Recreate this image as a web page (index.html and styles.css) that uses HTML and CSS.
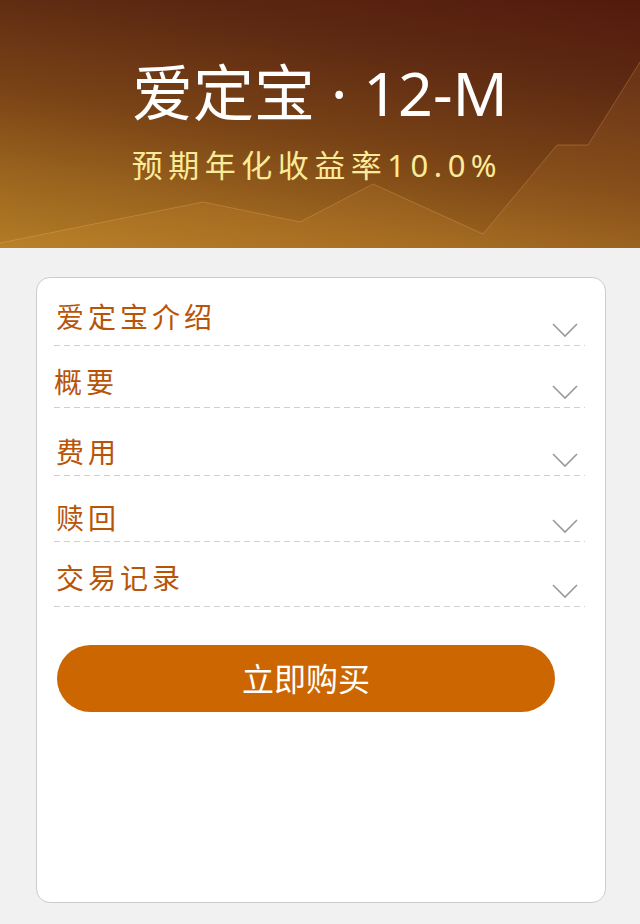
FILE: index.html
```html
<!DOCTYPE html>
<html lang="zh-CN">
<head>
<meta charset="utf-8">
<title>爱定宝 · 12-M</title>
<link rel="stylesheet" href="styles.css">
</head>
<body>
  <header class="hero">
    <svg class="hero-chart" viewBox="0 0 640 248" preserveAspectRatio="none" aria-hidden="true">
      <polygon class="chart-area" points="0,243 203,202 300,222 373,184 483,234 557,145 588,145 640,62 640,248 0,248"/>
      <polyline class="chart-line" points="0,243 203,202 300,222 373,184 483,234 557,145 588,145 640,62"/>
    </svg>
    <h1 class="hero-title">爱定宝 · 12-M</h1>
    <p class="hero-sub">预期年化收益率10.0%</p>
  </header>

  <main class="card">
    <div class="row row-1">
      <span class="row-label">爱定宝介绍</span>
      <svg class="chev" viewBox="0 0 26 15"><polyline points="1,1 13,13 25,1"/></svg>
    </div>
    <div class="row row-2">
      <span class="row-label">概要</span>
      <svg class="chev" viewBox="0 0 26 15"><polyline points="1,1 13,13 25,1"/></svg>
    </div>
    <div class="row row-3">
      <span class="row-label">费用</span>
      <svg class="chev" viewBox="0 0 26 15"><polyline points="1,1 13,13 25,1"/></svg>
    </div>
    <div class="row row-4">
      <span class="row-label">赎回</span>
      <svg class="chev" viewBox="0 0 26 15"><polyline points="1,1 13,13 25,1"/></svg>
    </div>
    <div class="row row-5">
      <span class="row-label">交易记录</span>
      <svg class="chev" viewBox="0 0 26 15"><polyline points="1,1 13,13 25,1"/></svg>
    </div>
    <button class="buy-btn" type="button">立即购买</button>
  </main>
</body>
</html>
```

FILE: styles.css
```css
* { box-sizing: border-box; }

html, body {
  margin: 0;
  padding: 0;
}

body {
  width: 640px;
  height: 924px;
  overflow: hidden;
  background: #f1f1f1;
  font-family: "Noto Sans", "Noto Sans CJK SC", sans-serif;
}

.hero {
  position: relative;
  height: 248px;
  padding-top: 63px;
  text-align: center;
  overflow: hidden;
  background: linear-gradient(189deg, #521a0d 0%, #5e2a12 26%, #7a4416 55%, #9d661f 80%, #b27c26 100%);
}

.hero-chart {
  position: absolute;
  left: 0;
  top: 0;
  width: 640px;
  height: 248px;
}

.chart-area {
  fill: rgba(255, 180, 70, 0.10);
}

.chart-line {
  fill: none;
  stroke: rgba(255, 200, 120, 0.25);
  stroke-width: 1;
}

.hero-title {
  position: relative;
  margin: 0;
  font-size: 61px;
  line-height: 60px;
  font-weight: 400;
  color: #ffffff;
  white-space: nowrap;
}

.hero-sub {
  position: relative;
  margin: 27px 0 0 -6px;
  font-size: 31px;
  line-height: 31px;
  letter-spacing: 5.5px;
  color: #fbeb98;
  white-space: nowrap;
}

.card {
  margin: 29px 34px 0 36px;
  height: 626px;
  background: #ffffff;
  border: 1px solid #cccccc;
  border-radius: 14px;
  padding: 0 20px 0 17px;
}

.row {
  display: flex;
  justify-content: space-between;
  align-items: flex-start;
  background-image: linear-gradient(to right, #cfcfcf 60%, transparent 60%);
  background-size: 10px 1px;
  background-repeat: repeat-x;
  background-position: left bottom;
}

.row-label {
  margin-left: 2px;
  font-size: 28px;
  line-height: 28px;
  letter-spacing: 4px;
  color: #b85407;
  white-space: nowrap;
}

.chev {
  align-self: flex-end;
  width: 26px;
  height: 15px;
  margin: 0 7px 8px 0;
  fill: none;
  stroke: #9a9a9a;
  stroke-width: 1.6;
}

.row-1 { height: 68px; padding-top: 25px; }
.row-2 { height: 62px; padding-top: 22px; }
.row-2 .row-label { margin-left: 0; }
.row-3 { height: 68px; padding-top: 30px; }
.row-4 { height: 66px; padding-top: 28px; }
.row-5 { height: 65px; padding-top: 22px; }

.buy-btn {
  display: flex;
  align-items: center;
  justify-content: center;
  margin: 38px 0 0 3px;
  width: 498px;
  height: 67px;
  border: none;
  border-radius: 34px;
  background: #cc6600;
  color: #ffffff;
  font-family: "Noto Sans CJK SC", sans-serif;
  font-size: 32px;
  padding: 0 0 4px;
}
```
